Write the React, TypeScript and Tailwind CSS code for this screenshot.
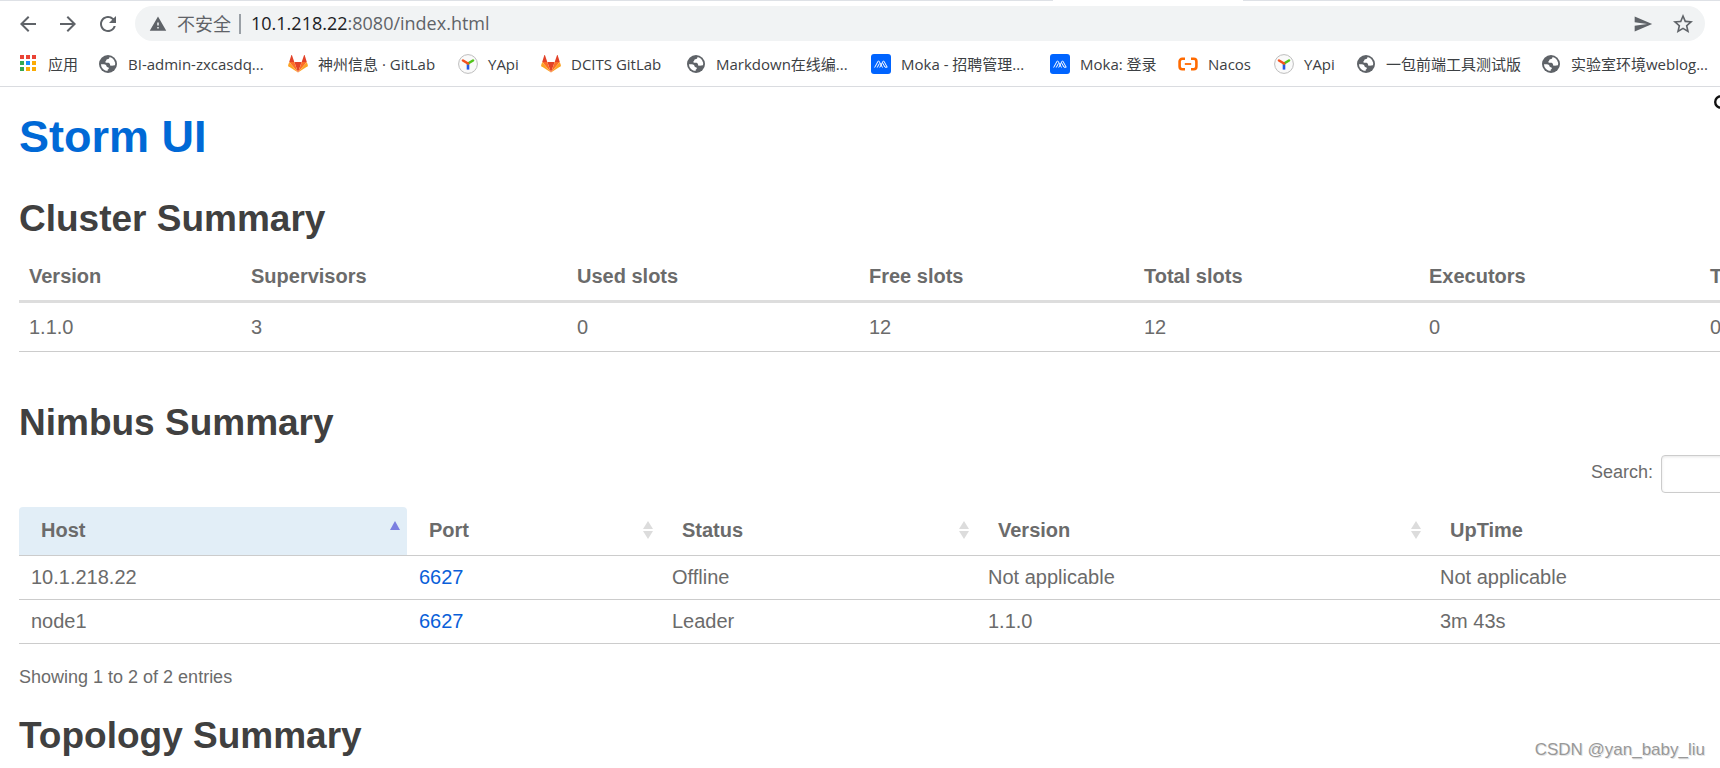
import React, { useState } from 'react';
import { MdArrowBack, MdArrowForward, MdRefresh, MdSend, MdStarBorder, MdWarning } from 'react-icons/md';

type IconName = 'globe' | 'gitlab' | 'yapi' | 'moka' | 'nacos';

const bookmarks: { label: string; icon: IconName; width: string }[] = [
  { label: 'BI-admin-zxcasdq...', icon: 'globe', width: 'w-[140px]' },
  { label: '神州信息 · GitLab', icon: 'gitlab', width: 'w-[120px]' },
  { label: 'YApi', icon: 'yapi', width: 'w-[33px]' },
  { label: 'DCITS GitLab', icon: 'gitlab', width: 'w-[95px]' },
  { label: 'Markdown在线编...', icon: 'globe', width: 'w-[135px]' },
  { label: 'Moka - 招聘管理...', icon: 'moka', width: 'w-[129px]' },
  { label: 'Moka: 登录', icon: 'moka', width: 'w-[78px]' },
  { label: 'Nacos', icon: 'nacos', width: 'w-[46px]' },
  { label: 'YApi', icon: 'yapi', width: 'w-[32px]' },
  { label: '一包前端工具测试版', icon: 'globe', width: 'w-[135px]' },
  { label: '实验室环境weblog...', icon: 'globe', width: 'w-[141px]' },
];

const appColors = ['#ea4335', '#ea4335', '#ea4335', '#34a853', '#1a8cff', '#fbab05', '#34a853', '#fbab05', '#fbab05'];

const clusterColumns = [
  { title: 'Version', value: '1.1.0', width: 'w-[222px]' },
  { title: 'Supervisors', value: '3', width: 'w-[326px]' },
  { title: 'Used slots', value: '0', width: 'w-[292px]' },
  { title: 'Free slots', value: '12', width: 'w-[275px]' },
  { title: 'Total slots', value: '12', width: 'w-[285px]' },
  { title: 'Executors', value: '0', width: 'w-[281px]' },
  { title: 'Tasks', value: '0', width: 'w-[240px]' },
];

const nimbusColumns = [
  { title: 'Host', width: 'w-[388px]' },
  { title: 'Port', width: 'w-[253px]' },
  { title: 'Status', width: 'w-[316px]' },
  { title: 'Version', width: 'w-[452px]' },
  { title: 'UpTime', width: 'w-[512px]' },
];

const nimbusRows = [
  { host: '10.1.218.22', port: '6627', status: 'Offline', version: 'Not applicable', uptime: 'Not applicable' },
  { host: 'node1', port: '6627', status: 'Leader', version: '1.1.0', uptime: '3m 43s' },
];

const BookmarkIcon: React.FC<{ name: IconName }> = ({ name }) => {
  switch (name) {
    case 'globe':
      return (
        <svg viewBox="0 0 20 20" className="size-5 shrink-0">
          <circle cx="10" cy="10" r="9" fill="#5f6368" />
          <path
            d="M11.6 2.9c-.4 1.100-.2 1.700-1.500 2.200-1.300.4-1.700.3-1.900 1.300-.2.900-1.200.9-1.100 1.700.1.800 1.400.7 2.500.7 1.500 0 2.300.6 2.400 1.800 0 1 .8 1 1.700 1.100 1.100.1 1.900-.5 3.300-.4A7.200 7.200 0 0 0 11.600 2.900z"
            fill="#fff"
          />
          <path
            d="M2.900 10.300c1.600 0 3.500-.1 4.700.5 1.100.6.6 1.700 1.500 2.300.8.500 1.900.2 1.800 1.200-.1.900-1.100.9-1.300 1.700-.1.500 0 .8.100 1.100A7.100 7.100 0 0 1 2.900 10.300z"
            fill="#fff"
          />
        </svg>
      );
    case 'gitlab':
      return (
        <svg viewBox="0 0 20 20" className="size-5 shrink-0">
          <path d="M10 18.600 13.700 8H6.300z" fill="#e24329" />
          <path d="M10 18.600 6.300 8H1.200z" fill="#fc6d26" />
          <path d="M1.200 8 .1 11.300c-.1.400 0 .8.300 1L10 18.600z" fill="#fca326" />
          <path d="M1.200 8h5.100L4 1.300c-.1-.4-.6-.4-.7 0z" fill="#e24329" />
          <path d="M10 18.600 13.700 8h5.100z" fill="#fc6d26" />
          <path d="m18.800 8 1.100 3.300c.1.400 0 .8-.3 1L10 18.600z" fill="#fca326" />
          <path d="M18.800 8h-5.100L16 1.300c.1-.4.6-.4.7 0z" fill="#e24329" />
        </svg>
      );
    case 'yapi':
      return (
        <svg viewBox="0 0 20 20" className="size-5 shrink-0">
          <circle cx="10" cy="10" r="9.400" fill="#fafafa" stroke="#bdbdbd" />
          <g strokeWidth="2.600" strokeLinecap="round">
            <path d="M10 9.800v5.800" stroke="#2458e6" strokeLinecap="butt" />
            <path d="M10 9.500 15 6.500" stroke="#52c41a" />
            <path d="M10 9.500 5 6.500" stroke="#f4511e" />
          </g>
        </svg>
      );
    case 'moka':
      return (
        <svg viewBox="0 0 20 20" className="size-5 shrink-0">
          <rect width="20" height="20" rx="3" fill="#0064ff" />
          <g fill="none" stroke="#fff" strokeWidth="1" strokeLinejoin="round" strokeLinecap="round">
            <path d="M3.800 13.200 7 7.300c.3-.5.800-.5 1.100 0l3.200 5.900" />
            <path d="M6.400 13.200 8.200 9.800M8.900 13.200 12 7.300c.3-.5.700-.5 1 0l3.200 5.900H14l-2-3.700" />
          </g>
        </svg>
      );
    case 'nacos':
      return (
        <svg viewBox="0 0 20 20" className="size-5 shrink-0">
          <g fill="none" stroke="#ff6a00" strokeWidth="2.600">
            <path d="M7 4.800H4.200a2.600 2.600 0 0 0-2.600 2.600v5.200a2.600 2.600 0 0 0 2.600 2.600H7" />
            <path d="M13 4.800h2.800a2.600 2.600 0 0 1 2.600 2.600v5.200a2.600 2.600 0 0 1-2.600 2.600H13" />
            <path d="M6.800 10h6.400" strokeWidth="1.800" />
          </g>
        </svg>
      );
  }
};

const BrowserBar: React.FC = () => (
  <header className="border-b border-[#dadce0] bg-white font-['Open_Sans','Noto_Sans_CJK_SC',sans-serif]">
    <div className="flex h-px bg-[#dee1e6]">
      <span className="ml-[1053px] w-[190px] bg-white" />
    </div>
    <div className="flex items-center pt-[5px] pr-[15px] pl-4 text-[#5f6368]">
      <button type="button" aria-label="Back" className="mr-4">
        <MdArrowBack className="size-6" />
      </button>
      <button type="button" aria-label="Forward" className="mr-4">
        <MdArrowForward className="size-6" />
      </button>
      <button type="button" aria-label="Reload" className="mr-[15px]">
        <MdRefresh className="size-6" />
      </button>
      <div className="flex h-[35px] flex-1 items-center rounded-full bg-[#f1f3f4] pr-2.5 pl-3.5">
        <MdWarning className="size-[18px] shrink-0" />
        <span className="ml-2.5 text-[18px] leading-6">不安全</span>
        <span className="mr-2.5 ml-2 h-5 w-0.5 bg-[#9aa0a6]" />
        <span className="flex-1 pb-0.5 text-[18px] leading-6">
          <span className="text-[#202124]">10.1.218.22</span>:8080/index.html
        </span>
        <button type="button" aria-label="Send" className="mr-[18px]">
          <MdSend className="size-5" />
        </button>
        <button type="button" aria-label="Bookmark this page">
          <MdStarBorder className="size-6" />
        </button>
      </div>
    </div>
    <nav className="flex h-[45px] items-center gap-5 overflow-hidden pl-[18px] text-[15px] leading-5 whitespace-nowrap text-[#3c4043]">
      <a href="#apps" className="flex items-center gap-2.5">
        <svg viewBox="0 0 20 20" className="size-5 shrink-0">
          {appColors.map((color, i) => (
            <rect key={i} x={2 + (i % 3) * 6} y={1 + Math.floor(i / 3) * 6} width="4" height="4" fill={color} />
          ))}
        </svg>
        <span className="w-[30px]">应用</span>
      </a>
      {bookmarks.map((b, i) => (
        <a key={i} href="#bookmark" className="flex items-center gap-2.5">
          <BookmarkIcon name={b.icon} />
          <span className={b.width}>{b.label}</span>
        </a>
      ))}
    </nav>
  </header>
);

const SortArrows: React.FC<{ active: boolean }> = ({ active }) => (
  <svg viewBox="0 0 12 20" className="h-5 w-3 shrink-0">
    {active ? (
      <path d="M6 1l5 9H1z" fill="#7b7fe0" />
    ) : (
      <path d="M6 1l5 8H1zM1 11h10l-5 8z" fill="#dcdcdc" />
    )}
  </svg>
);

export default function App() {
  const [search, setSearch] = useState('');

  return (
    <div className="h-screen overflow-hidden bg-white font-['Liberation_Sans',Arial,sans-serif] text-[20px] leading-7 text-[#6b6b6b]">
      <BrowserBar />
      <main className="relative pl-[19px]">
        <h1 className="pt-[23px] text-[45px] leading-[54px] font-bold text-[#0069d6]">
          <a href="#home">Storm UI</a>
        </h1>

        {/* Cluster summary */}
        <h2 className="mt-7 text-[37px] leading-[54px] font-bold text-[#404040]">Cluster Summary</h2>
        <div className="mt-1.5 overflow-hidden">
          <table className="w-[1921px] table-fixed border-collapse text-left">
            <thead>
              <tr className="border-b-3 border-[#ddd]">
                {clusterColumns.map((c) => (
                  <th key={c.title} className={`${c.width} p-2.5`}>{c.title}</th>
                ))}
              </tr>
            </thead>
            <tbody>
              <tr className="border-b border-[#ccc]">
                {clusterColumns.map((c) => (
                  <td key={c.title} className="p-2.5">{c.value}</td>
                ))}
              </tr>
            </tbody>
          </table>
        </div>

        {/* Nimbus summary */}
        <h2 className="mt-11 text-[37px] leading-[54px] font-bold text-[#404040]">Nimbus Summary</h2>
        <div className="overflow-hidden text-[18px]">
          <div className="flex w-[1921px] justify-end pt-[5px]">
            <label htmlFor="search" className="pt-[3px]">Search:</label>
            <input
              id="search"
              value={search}
              onChange={(e) => setSearch(e.target.value)}
              className="ml-2 h-[38px] w-[279px] rounded border border-[#ccc] px-2 shadow-[inset_0_1px_3px_rgba(0,0,0,0.1)]"
            />
          </div>
          <table className="mt-3.5 w-[1921px] table-fixed border-collapse text-left text-[20px]">
            <thead>
              <tr className="border-b border-[#ccc]">
                {nimbusColumns.map((c, i) => (
                  <th key={c.title} className={`${c.width} p-0`}>
                    <button
                      type="button"
                      className={`flex h-12 w-full items-center justify-between rounded-t pr-1.5 pb-0.5 pl-[22px] ${i === 0 ? 'bg-[#e2eef7]' : ''}`}
                    >
                      {c.title}
                      <SortArrows active={i === 0} />
                    </button>
                  </th>
                ))}
              </tr>
            </thead>
            <tbody>
              {nimbusRows.map((row) => (
                <tr key={row.host} className="border-b border-[#ccc]">
                  <td className="px-3 py-2 leading-[27px]">{row.host}</td>
                  <td className="px-3 py-2 leading-[27px]">
                    <a href="#log" className="text-[#0a5fd9]">{row.port}</a>
                  </td>
                  <td className="px-3 py-2 leading-[27px]">{row.status}</td>
                  <td className="px-3 py-2 leading-[27px]">{row.version}</td>
                  <td className="px-3 py-2 leading-[27px]">{row.uptime}</td>
                </tr>
              ))}
            </tbody>
          </table>
          <p className="mt-[19px]">Showing 1 to 2 of 2 entries</p>
        </div>

        {/* Topology summary */}
        <h2 className="mt-[18px] text-[37px] leading-[54px] font-bold text-[#404040]">Topology Summary</h2>
      </main>

      <svg viewBox="0 0 14 14" className="absolute top-[95px] -right-2 size-3.5">
        <circle cx="7" cy="7" r="5.800" fill="none" stroke="#111" strokeWidth="2.400" />
      </svg>
      <span className="absolute right-[15px] bottom-1.5 text-[17px] leading-6 text-[#999] [text-shadow:1px_1px_0_#e4e4e4]">
        CSDN @yan_baby_liu
      </span>
    </div>
  );
}
